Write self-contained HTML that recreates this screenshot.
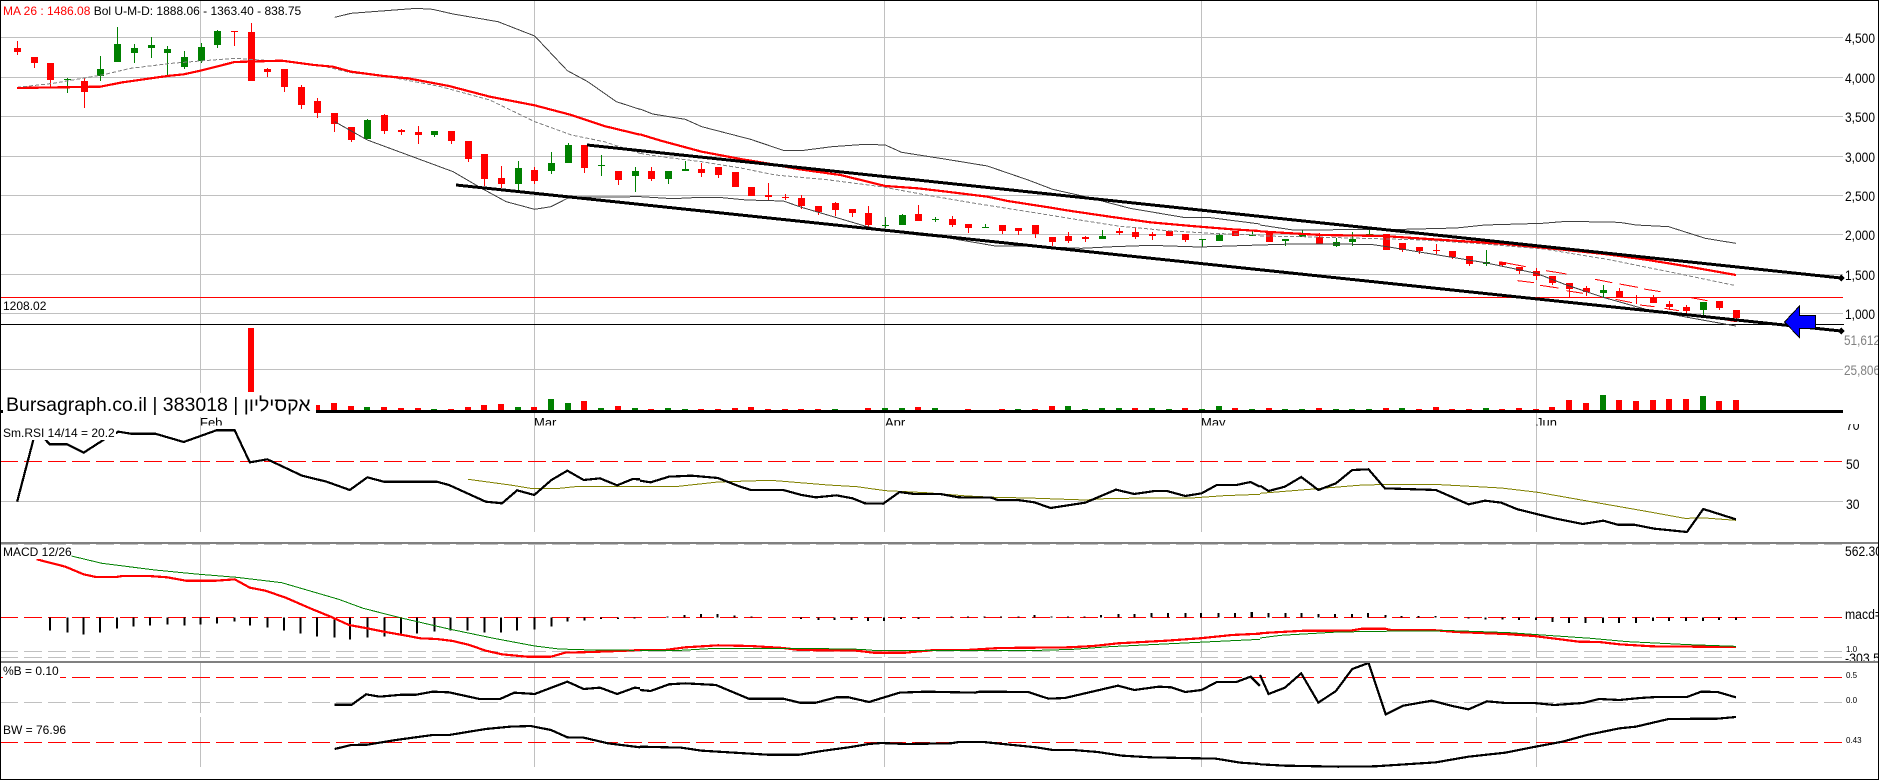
<!DOCTYPE html>
<html><head><meta charset="utf-8"><title>Bursagraph</title>
<style>
html,body{margin:0;padding:0;background:#fff;width:1879px;height:780px;overflow:hidden}
svg{display:block;shape-rendering:crispEdges;font-family:"Liberation Sans",Arial,sans-serif}
polyline,.t path{vector-effect:non-scaling-stroke;fill:none}
.ma{stroke:#f00;stroke-width:2.2}
.mid{stroke:#808080;stroke-dasharray:4 2}
.band{stroke:#404040}
.k{stroke:#000;stroke-width:2.2}
.ol{stroke:#808000}
.gn{stroke:#008000}
text{font-size:13px;fill:#000}
.ax{font-size:13.5px}
.rd{stroke:#f00;stroke-dasharray:18 6;fill:none}
.gd{stroke:#c0c0c0;stroke-dasharray:18 6;fill:none}
</style></head><body>
<svg width="1879" height="780" viewBox="0 0 1879 780" xmlns="http://www.w3.org/2000/svg">
<defs>
<clipPath id="c1"><rect x="0" y="412" width="1879" height="13.5"/></clipPath>
<clipPath id="c2"><rect x="1840" y="424" width="39" height="10"/></clipPath>
<clipPath id="c3"><rect x="1840" y="645" width="39" height="16"/></clipPath>
</defs>
<rect width="1879" height="780" fill="#fff"/>

<!-- grid -->
<path fill="none" stroke="#c0c0c0" d="M1 37.5H1843M1 77.5H1843M1 116.5H1843M1 156.5H1843M1 195.5H1843M1 234.5H1843M1 274.5H1843M1 313.5H1843M1 369.5H1843M1 501.5H1843
M200.5 1V532M534.5 1V532M884.5 1V532M1201.5 1V532M1536.5 1V532
M200.5 545V657M534.5 545V657M884.5 545V657M1201.5 545V657M1536.5 545V657
M200.5 663V713M534.5 663V713M884.5 663V713M1201.5 663V713M1536.5 663V713
M200.5 717V767M534.5 717V767M884.5 717V767M1201.5 717V767M1536.5 717V767"/>
<path class="gd" d="M0 544.5H1843M0 651.5H1843M0 657.5H1843M0 702.5H1843"/>
<path class="rd" d="M0 461.5H1843M0 617.5H1843M0 677.5H1843M0 742.5H1843"/>
<path stroke="#f00" d="M1 297.5H1843"/>
<path stroke="#000" d="M1 324.5H1844"/>

<!-- volume -->
<path fill="#f00" d="M248 328h6V392h-6zM314 405h6V411h-6zM331 403h6V411h-6zM348 406h6V411h-6zM381 407h6V411h-6zM398 408h6V411h-6zM415 408h6V411h-6zM448 409h6V411h-6zM465 407h6V411h-6zM481 405h6V411h-6zM498 404h6V411h-6zM531 407h6V411h-6zM581 401h6V411h-6zM615 406h6V411h-6zM648 409h6V411h-6zM698 409h6V411h-6zM715 409h6V411h-6zM732 408h6V411h-6zM748 407h6V411h-6zM765 409h6V411h-6zM782 409h6V411h-6zM798 409h6V411h-6zM815 409h6V411h-6zM865 408h6V411h-6zM915 407h6V411h-6zM965 409h6V411h-6zM999 409h6V411h-6zM1032 409h6V411h-6zM1049 406h6V411h-6zM1132 408h6V411h-6zM1182 408h6V411h-6zM1232 408h6V411h-6zM1266 408h6V411h-6zM1316 408h6V411h-6zM1383 408h6V411h-6zM1416 409h6V411h-6zM1433 407h6V411h-6zM1449 409h6V411h-6zM1466 409h6V411h-6zM1499 409h6V411h-6zM1516 408h6V411h-6zM1533 409h6V411h-6zM1549 407h6V411h-6zM1566 400h6V411h-6zM1583 403h6V411h-6zM1616 400h6V411h-6zM1633 401h6V411h-6zM1650 400h6V411h-6zM1666 399h6V411h-6zM1683 399h6V411h-6zM1716 401h6V411h-6zM1733 400h6V411h-6z"/>
<path fill="#008000" d="M364 407h6V411h-6zM431 409h6V411h-6zM515 407h6V411h-6zM548 399h6V411h-6zM565 403h6V411h-6zM598 408h6V411h-6zM632 408h6V411h-6zM665 408h6V411h-6zM682 409h6V411h-6zM832 409h6V411h-6zM882 408h6V411h-6zM899 408h6V411h-6zM932 408h6V411h-6zM1015 409h6V411h-6zM1065 406h6V411h-6zM1082 409h6V411h-6zM1099 408h6V411h-6zM1116 408h6V411h-6zM1149 408h6V411h-6zM1166 409h6V411h-6zM1199 409h6V411h-6zM1216 406h6V411h-6zM1249 409h6V411h-6zM1282 409h6V411h-6zM1299 409h6V411h-6zM1333 409h6V411h-6zM1349 409h6V411h-6zM1366 409h6V411h-6zM1399 408h6V411h-6zM1483 408h6V411h-6zM1600 395h6V411h-6zM1700 396h6V411h-6z"/>
<rect x="1" y="410" width="1842" height="3" fill="#000"/>

<!-- candles: red -->
<path stroke="#f00" fill="none" d="M17.5 41V55M34.5 57V68M50.5 63V87M84.5 78V108M234.5 31V46M251.5 23V81M267.5 68V77M284.5 69V92M301.5 85V109M317.5 98V118M334.5 113V132M351.5 127V142M384.5 114V134M401.5 129V135M418.5 126V144M451.5 131V144M468.5 141V162M484.5 154V186M501.5 166V188M534.5 167V184M584.5 145V173M618.5 171V185M651.5 167V181M701.5 163V177M718.5 167V178M768.5 183V200M785.5 194V200M801.5 195V209M818.5 206V215M835.5 202V216M852.5 209V217M868.5 206V227M918.5 205V221M952.5 216V227M968.5 224V233M1002.5 225V234M1018.5 228V235M1035.5 225V238M1052.5 237V246M1068.5 232V243M1085.5 236V242M1119.5 228V235M1135.5 228V239M1152.5 232V240M1185.5 234V242M1319.5 233V244M1402.5 243V252M1419.5 247V254M1436.5 244V254M1452.5 251V259M1469.5 256V266M1502.5 262V266M1519.5 267V274M1536.5 268V280M1552.5 276V285M1569.5 283V297M1586.5 286V296M1619.5 288V298M1636.5 295V304M1653.5 295V303M1669.5 301V310M1686.5 305V313M1719.5 301V310M1736.5 310V322"/>
<path fill="#f00" d="M14 48h7v4h-7zM31 57h7v6h-7zM47 63h7v17h-7zM81 81h7v11h-7zM231 31h7v1h-7zM248 32h7v49h-7zM264 69h7v3h-7zM281 69h7v18h-7zM298 87h7v18h-7zM314 101h7v12h-7zM331 113h7v11h-7zM348 127h7v13h-7zM381 115h7v16h-7zM398 130h7v2h-7zM415 132h7v3h-7zM448 131h7v10h-7zM465 141h7v18h-7zM481 154h7v25h-7zM498 178h7v6h-7zM531 170h7v11h-7zM581 145h7v23h-7zM615 171h7v9h-7zM648 171h7v8h-7zM698 169h7v4h-7zM715 167h7v8h-7zM732 172h7v15h-7zM748 187h7v9h-7zM765 195h7v2h-7zM782 197h7v1h-7zM798 198h7v8h-7zM815 206h7v6h-7zM832 203h7v7h-7zM849 209h7v4h-7zM865 213h7v12h-7zM915 214h7v7h-7zM949 219h7v6h-7zM965 224h7v4h-7zM999 225h7v6h-7zM1015 228h7v3h-7zM1032 225h7v9h-7zM1049 237h7v5h-7zM1065 236h7v5h-7zM1082 237h7v2h-7zM1116 231h7v2h-7zM1132 232h7v5h-7zM1149 234h7v2h-7zM1166 231h7v5h-7zM1182 234h7v6h-7zM1232 231h7v5h-7zM1266 231h7v11h-7zM1316 237h7v7h-7zM1383 234h7v16h-7zM1399 243h7v7h-7zM1416 247h7v4h-7zM1433 250h7v1h-7zM1449 251h7v6h-7zM1466 256h7v8h-7zM1499 262h7v3h-7zM1516 267h7v4h-7zM1533 271h7v5h-7zM1549 276h7v7h-7zM1566 283h7v6h-7zM1583 288h7v4h-7zM1616 291h7v7h-7zM1633 297h7v1h-7zM1650 297h7v6h-7zM1666 304h7v3h-7zM1683 307h7v4h-7zM1716 301h7v7h-7zM1733 310h7v8h-7z"/>
<!-- candles: green -->
<path stroke="#008000" fill="none" d="M67.5 78V93M100.5 56V81M117.5 27V62M134.5 44V63M151.5 37V58M167.5 46V76M184.5 51V69M201.5 43V63M217.5 30V48M367.5 119V139M434.5 131V137M518.5 161V190M551.5 152V174M568.5 143V163M601.5 155V176M635.5 167V192M668.5 171V184M685.5 161V171M885.5 217V228M902.5 214V225M935.5 217V222M985.5 224V228M1102.5 230V239M1202.5 239V247M1219.5 234V241M1252.5 230V236M1285.5 239V246M1302.5 230V237M1336.5 238V247M1352.5 232V246M1369.5 228V235M1486.5 250V266M1603.5 285V297M1703.5 302V315"/>
<path fill="#008000" d="M64 79h7v1h-7zM97 69h7v7h-7zM114 44h7v18h-7zM131 48h7v5h-7zM148 45h7v3h-7zM164 49h7v4h-7zM181 57h7v10h-7zM198 47h7v14h-7zM214 31h7v14h-7zM364 120h7v19h-7zM431 131h7v4h-7zM515 168h7v16h-7zM548 163h7v8h-7zM565 145h7v18h-7zM598 165h7v1h-7zM632 171h7v5h-7zM665 171h7v8h-7zM682 169h7v2h-7zM882 225h7v1h-7zM899 215h7v10h-7zM932 219h7v1h-7zM982 227h7v1h-7zM1099 236h7v3h-7zM1199 239h7v1h-7zM1216 235h7v6h-7zM1249 235h7v1h-7zM1282 239h7v2h-7zM1299 235h7v2h-7zM1333 242h7v4h-7zM1349 239h7v3h-7zM1366 234h7v1h-7zM1483 262h7v2h-7zM1600 290h7v3h-7zM1700 302h7v8h-7z"/>

<!-- Z1 lines -->
<g transform="scale(.40816,.33333)">
<polyline class="band" points="820,52 860,40 1020,25 1060,28 1110,42 1220,65 1310,108 1390,212 1440,245 1510,305 1568,328"/>
<polyline class="band" points="820,365 900,420 1110,515 1180,565 1240,605 1310,628 1350,620 1395,592 1568,590"/>
<polyline class="mid" points="42,262 130,250 250,225 320,205 420,190 500,182 575,175 700,185 780,195 860,218 960,232 1080,260 1200,300 1310,365 1400,405 1480,425 1568,460"/>
<polyline class="ma" points="42,264 246,260 300,247 410,228 450,223 491,212 575,186 690,182 770,195 815,200 860,215 940,228 1000,235 1100,258 1200,290 1310,316 1400,345 1480,378 1568,404"/>
</g>
<!-- Z2 lines -->
<g transform="translate(620,100) scale(.40816,.33333)">
<polyline class="band" points="49,27 80,42 160,58 200,80 320,118 400,151 450,151 520,140 600,133 650,135 690,157 800,178 900,198 1000,240 1060,268 1140,290 1250,325 1380,352 1440,352 1568,372"/>
<polyline class="band" points="49,290 130,296 180,293 250,293 310,300 400,303 445,322 600,378 650,392 730,405 800,413 920,438 990,438 1130,445 1210,440 1300,436 1420,441 1568,435"/>
<polyline class="mid" points="49,160 100,170 200,185 300,205 380,225 500,238 640,260 750,285 870,310 1000,335 1100,355 1220,378 1340,392 1450,400 1568,405"/>
<polyline class="ma" points="49,103 100,122 200,155 300,178 360,190 440,208 540,225 650,258 730,265 800,275 900,290 950,303 1050,322 1100,332 1200,350 1300,367 1400,378 1500,388 1568,393"/>
</g>
<!-- Z3/Z4 lines -->
<g transform="translate(1240,0) scale(.40816,.33333)">
<polyline class="band" points="49,675 130,690 400,688 530,684 600,675 740,670 800,664 930,667 970,675 1050,680 1140,715 1215,730"/>
</g>
<g class="t" transform="translate(1240,220) scale(.40816,.33333)">
<polyline class="band" points="49,75 130,72 320,73 360,80 600,128 726,160 800,195 890,232 1000,270 1110,295 1215,318"/>
<polyline class="mid" points="49,48 150,50 300,55 450,60 600,72 750,88 900,118 1050,155 1215,197"/>
<polyline class="ma" points="49,34 100,38 200,45 350,48 500,60 650,72 800,90 900,103 1000,120 1100,140 1215,165"/>
<path stroke="#f00" stroke-width="1" d="M635 125L700 140M750 152L800 162M870 178L912 188M930 192L975 202M990 207L1030 215M1105 233L1145 242M680 182L720 188M735 196L780 204M800 212L840 220M920 238L960 248M980 255L1015 260M1040 265L1075 272M1120 285L1215 305"/>
</g>

<!-- trend lines -->
<path stroke="#000" stroke-width="3" d="M587 145L1841 278M456 185L1841 331"/>
<path fill="#000" d="M1841 274.5l3.500 3.500l-3.500 3.500l-3.500-3.500zM1841 327.500l3.500 3.500l-3.500 3.500l-3.500-3.500z"/>

<!-- arrow -->
<path fill="#0000ff" stroke="#000" d="M1784.500 322L1799.500 306V315.500H1815.500V328.500H1799.500V337.500z"/>

<!-- RSI -->
<polyline class="ol" transform="translate(0,260) scale(.40816,.33333)" points="1147,658 1250,675 1300,685 1370,685 1410,680 1568,679"/>
<g transform="translate(620,360) scale(.40816,.33333)">
<polyline class="ol" points="49,380 135,380 240,366 340,362 380,362 510,375 580,380 650,392 750,398 850,408 920,412 1000,414 1140,420 1200,415 1400,414 1480,407 1568,403"/>
<polyline class="k" points="49,362 75,367 120,350 175,347 240,354 290,378 320,390 400,390 445,405 480,412 530,406 570,415 600,430 645,431 685,396 720,402 785,402 830,412 910,413 925,420 975,420 1015,427 1055,444 1140,428 1215,389 1260,402 1310,393 1340,393 1385,408 1425,400 1462,375 1510,375 1545,366 1568,380"/>
</g>
<g transform="translate(0,260) scale(.40816,.33333)">
<polyline class="k" points="42,725 88,510 122,553 165,553 205,578 253,540 290,515 320,521 380,521 450,546 530,511 575,511 612,607 655,598 740,647 800,665 857,690 900,652 940,665 1070,665 1100,675 1190,725 1230,730 1267,691 1309,705 1351,660 1390,632 1430,660 1470,655 1512,676 1550,657 1568,658"/>
</g>
<g transform="translate(1240,480) scale(.40816,.33333)">
<polyline class="ol" points="49,40 150,30 300,15 380,13 490,14 640,24 730,37 860,65 1000,95 1090,115 1140,114 1215,121"/>
<polyline class="k" points="49,17 70,33 110,20 150,-9 192,30 235,10 275,-30 315,-32 355,25 480,30 560,73 600,62 640,68 680,88 770,115 840,132 890,122 925,134 965,134 1015,146 1095,156 1135,87 1215,118"/>
</g>

<!-- MACD ticks -->
<g class="t" transform="translate(0,520) scale(.40816,.33333)">
<path stroke="#000" stroke-width="2" d="M122 292V332M165 292V338M205 292V344M245 292V338M287 292V326M327 292V320M368 292V317M410 292V314M452 292V317M491 292V314M532 292V311M574 292V305M613 292V317M655 292V323M696 292V332M736 292V341M777 292V350M819 292V353M858 292V359M900 292V353M942 292V350M982 292V344M1022 292V341M1064 292V335M1104 292V332M1145 292V332M1187 292V338M1228 292V338M1267 292V332M1309 292V329M1351 292V320M1390 292V305M1432 292V302M1473 292V297M1514 292V297M1555 292V295"/>
</g>
<g class="t" transform="translate(620,360) scale(.40816,.33333)">
<path stroke="#000" stroke-width="2" d="M35 772V776M116 772V769M158 772V765M199 772V762M239 772V762M280 772V766M322 772V769M444 772V777M486 772V780M525 772V780M567 772V780M608 772V783M647 772V783M689 772V777M731 772V777M812 772V769M853 772V769M893 772V769M934 772V769M976 772V769M1015 772V765M1057 772V769M1098 772V769M1138 772V769M1179 772V765M1221 772V762M1260 772V762M1302 772V759M1343 772V759M1385 772V759M1424 772V759M1466 772V759M1507 772V759M1548 772V756"/>
</g>
<g class="t" transform="translate(1240,480) scale(.40816,.33333)">
<path stroke="#000" stroke-width="2" d="M28 412V396M70 412V399M111 412V399M151 412V399M192 412V402M233 412V402M274 412V402M314 412V399M356 412V405M396 412V408M437 412V408M479 412V408M560 412V416M602 412V418M643 412V418M683 412V420M725 412V420M766 412V426M806 412V429M847 412V429M889 412V429M928 412V429M970 412V429M1012 412V423M1051 412V423M1093 412V423M1134 412V423M1174 412V420M1215 412V420"/>
</g>

<!-- MACD lines -->
<g transform="translate(0,520) scale(.40816,.33333)">
<polyline class="ma" points="90,118 160,140 205,163 235,171 285,171 300,168 365,168 410,172 455,182 530,182 575,178 612,203 650,212 700,233 760,265 810,290 855,315 900,325 940,335 1000,348 1030,355 1070,357 1110,363 1150,375 1190,392 1230,403 1290,410 1350,410 1385,398 1450,396 1555,391"/>
<polyline class="gn" points="175,108 250,130 380,150 480,162 580,172 690,188 830,238 890,265 980,293 1100,327 1210,355 1310,378 1370,387 1450,390 1568,391"/>
<polyline class="k" points="820,554 862,554 897,523 930,530 985,524 1020,524 1060,515 1100,517 1175,537 1225,537 1260,518 1310,522 1390,485 1430,507 1470,503 1512,522 1555,503 1568,505"/>
<polyline class="k" points="820,687 860,675 900,674 970,660 1060,645 1100,645 1190,627 1250,620 1300,618 1350,630 1390,652 1430,653 1490,670 1568,682"/>
</g>
<g transform="translate(620,360) scale(.40816,.33333)">
<polyline class="ma" points="35,870 110,870 160,862 240,856 320,858 400,864 440,870 580,872 620,878 700,878 770,870 850,870 930,864 1100,862 1160,858 1220,850 1340,842 1420,835 1500,825 1568,821"/>
<polyline class="gn" points="49,872 135,872 220,866 500,866 590,868 630,872 870,872 1000,872 1110,868 1200,860 1400,848 1568,838"/>
<polyline class="k" points="49,990 75,993 120,973 160,970 235,975 315,1016 400,1016 440,1028 480,1028 530,1012 560,1012 610,1026 685,998 750,995 870,998 880,995 1000,996 1050,1016 1090,1014 1220,977 1260,990 1320,980 1350,982 1385,996 1425,990 1462,966 1510,966 1545,950 1568,978"/>
<polyline class="k" points="49,1160 150,1163 200,1172 280,1178 360,1184 440,1184 500,1172 560,1162 610,1152 640,1149 700,1152 810,1150 830,1146 890,1146 1020,1162 1060,1170 1110,1170 1170,1176 1230,1187 1300,1192 1460,1196 1520,1208 1568,1212"/>
</g>
<g transform="translate(1240,480) scale(.40816,.33333)">
<polyline class="ma" points="49,460 70,458 160,452 270,452 300,446 355,446 370,450 470,450 530,456 650,462 720,468 830,485 880,486 930,493 1010,499 1215,501"/>
<polyline class="gn" points="49,474 100,466 240,456 400,453 520,452 660,458 740,465 860,475 950,485 1100,494 1215,499"/>
<polyline class="k" points="49,585 70,642 110,623 150,580 192,668 235,633 275,567 315,549 357,703 400,677 470,662 520,678 560,688 605,664 650,669 720,669 770,675 840,669 880,657 930,660 980,654 1020,651 1095,651 1130,635 1170,636 1215,652"/>
<polyline class="k" points="49,853 110,857 240,860 330,859 480,847 560,830 650,818 720,801 790,785 850,765 930,745 970,740 1050,717 1170,716 1215,711"/>
</g>

<!-- dividers + frame -->
<rect x="0" y="542" width="1879" height="2" fill="#808080"/>
<rect x="0" y="661" width="1879" height="2" fill="#808080"/>
<rect x="0" y="0" width="1879" height="1" fill="#000"/>
<rect x="0" y="779" width="1879" height="1" fill="#000"/>
<rect x="0" y="0" width="1" height="780" fill="#000"/>

<!-- text boxes -->
<rect x="3" y="393" width="313" height="24" fill="#fff"/>
<rect x="3" y="426" width="113" height="14" fill="#fff"/>
<rect x="3" y="545" width="68" height="14" fill="#fff"/>
<rect x="3" y="665" width="57" height="14" fill="#fff"/>
<rect x="3" y="724" width="63" height="13" fill="#fff"/>

<text x="3" y="15" style="font-size:12px"><tspan fill="#f00" style="fill:#f00">MA 26 : 1486.08</tspan> <tspan>Bol U-M-D: 1888.06 - 1363.40 - 838.75</tspan></text>
<text x="3" y="310" style="font-size:12px">1208.02</text>
<text x="6" y="411" style="font-size:19.5px" direction="ltr">Bursagraph.co.il | 383018 | אקסיליון</text>
<g clip-path="url(#c1)">
<text x="200" y="427">Feb</text><text x="534" y="427">Mar</text><text x="885" y="427">Apr</text><text x="1201" y="427">May</text><text x="1536" y="427">Jun</text>
</g>
<text x="3" y="437" style="font-size:12px">Sm.RSI 14/14 = 20.2</text>
<text x="3" y="556" style="font-size:12px">MACD 12/26</text>
<text x="3" y="675" style="font-size:12px">%B = 0.10</text>
<text x="3" y="734" style="font-size:12px">BW = 76.96</text>

<text class="ax" x="1845" y="43" textLength="30" lengthAdjust="spacingAndGlyphs">4,500</text>
<text class="ax" x="1845" y="83" textLength="30" lengthAdjust="spacingAndGlyphs">4,000</text>
<text class="ax" x="1845" y="122" textLength="30" lengthAdjust="spacingAndGlyphs">3,500</text>
<text class="ax" x="1845" y="162" textLength="30" lengthAdjust="spacingAndGlyphs">3,000</text>
<text class="ax" x="1845" y="201" textLength="30" lengthAdjust="spacingAndGlyphs">2,500</text>
<text class="ax" x="1845" y="240" textLength="30" lengthAdjust="spacingAndGlyphs">2,000</text>
<text class="ax" x="1845" y="280" textLength="30" lengthAdjust="spacingAndGlyphs">1,500</text>
<text class="ax" x="1845" y="319" textLength="30" lengthAdjust="spacingAndGlyphs">1,000</text>
<text class="ax" x="1844" y="345" textLength="36" lengthAdjust="spacingAndGlyphs" style="fill:#808080">51,612</text>
<text class="ax" x="1844" y="375" textLength="36" lengthAdjust="spacingAndGlyphs" style="fill:#808080">25,806</text>
<g clip-path="url(#c2)"><text x="1846" y="430" class="ax" textLength="13.500" lengthAdjust="spacingAndGlyphs">70</text></g>
<text class="ax" x="1846" y="469" textLength="13.500" lengthAdjust="spacingAndGlyphs">50</text>
<text class="ax" x="1846" y="509" textLength="13.500" lengthAdjust="spacingAndGlyphs">30</text>
<text class="ax" x="1845" y="556" textLength="37" lengthAdjust="spacingAndGlyphs">562.30</text>
<text class="ax" x="1845" y="619" textLength="37" lengthAdjust="spacingAndGlyphs">macd=</text>
<text x="1846" y="652" style="font-size:8px">1.0</text>
<g clip-path="url(#c3)"><text class="ax" x="1845" y="663" textLength="35" lengthAdjust="spacingAndGlyphs">-303.5</text></g>
<text x="1846" y="678" style="font-size:8px">0.5</text>
<text x="1846" y="703" style="font-size:8px">0.0</text>
<text x="1846" y="743" style="font-size:8px">0.43</text>
<rect x="1878" y="0" width="1" height="780" fill="#000"/>
</svg>
</body></html>
